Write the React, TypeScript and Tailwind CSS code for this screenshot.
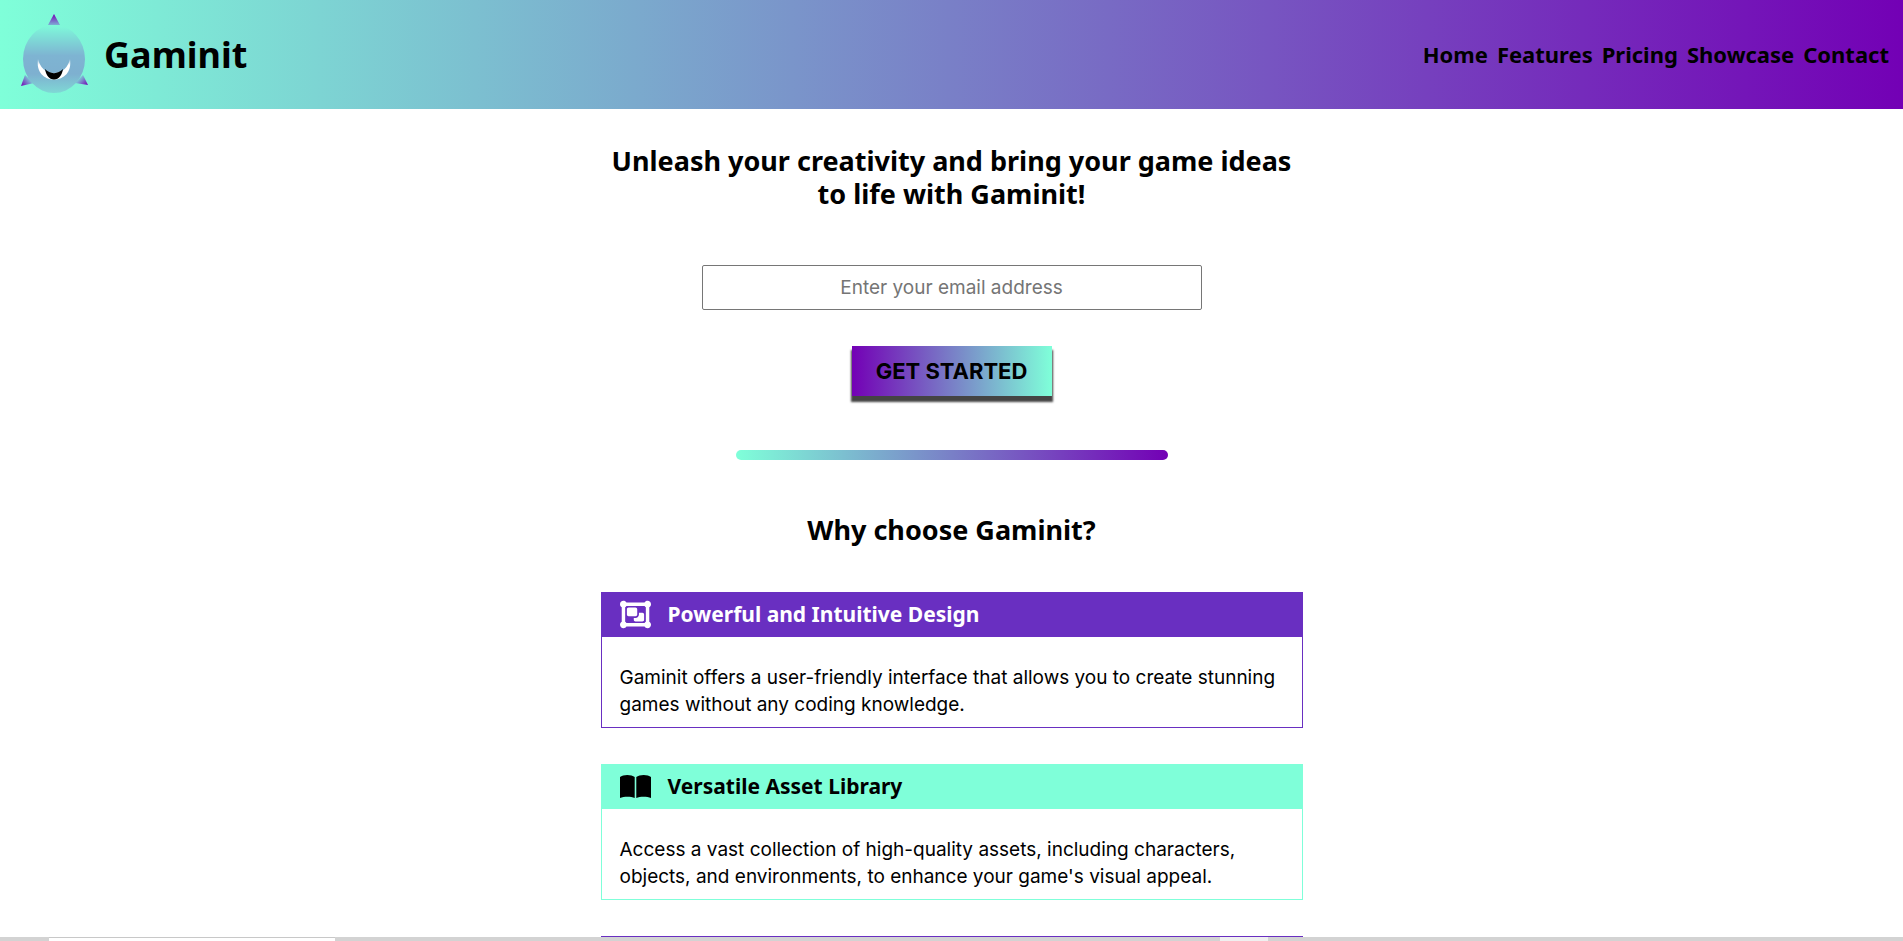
import type { ReactNode } from "react";
import { FaObjectGroup } from "react-icons/fa6";

const links = ["Home", "Features", "Pricing", "Showcase", "Contact"];

function Logo() {
  return (
    <svg viewBox="0 0 72 84" className="h-[84px] w-[72px] shrink-0" aria-hidden="true">
      <defs>
        <linearGradient id="body" x1="0" y1="0" x2="0" y2="1">
          <stop offset="0" stopColor="#7ffbd9" />
          <stop offset="0.1" stopColor="#7eead8" />
          <stop offset="0.45" stopColor="#7eb4d2" />
          <stop offset="0.72" stopColor="#7eb0d0" />
          <stop offset="1" stopColor="#7fd8d5" />
        </linearGradient>
        <linearGradient id="top" x1="0" y1="0" x2="0" y2="1">
          <stop offset="0" stopColor="#7300b5" />
          <stop offset="1" stopColor="#7eaed4" />
        </linearGradient>
        <linearGradient id="left" x1="0" y1="1" x2="1" y2="0.3">
          <stop offset="0" stopColor="#7300b5" />
          <stop offset="0.7" stopColor="#7eb8d4" />
        </linearGradient>
        <linearGradient id="right" x1="1" y1="1" x2="0" y2="0.3">
          <stop offset="0" stopColor="#7300b5" />
          <stop offset="0.7" stopColor="#7eb8d4" />
        </linearGradient>
        <linearGradient id="smile" x1="0" y1="0" x2="0" y2="1">
          <stop offset="0" stopColor="#fff" stopOpacity="0.3" />
          <stop offset="0.3" stopColor="#fff" />
        </linearGradient>
      </defs>
      <path d="M36 1 L42 12 H30 Z" fill="url(#top)" />
      <path d="M7 62 L3 73 L16 70 Z" fill="url(#left)" />
      <path d="M65 62 L70 72 L57 70 Z" fill="url(#right)" />
      <ellipse cx="36" cy="46" rx="31" ry="34" fill="url(#body)" />
      <path d="M20 46 C22 54 27 60 36 60 C45 60 50 54 52 46 C54 59 46 66.500 36 66.500 C26 66.500 18 59 20 46 Z" fill="url(#smile)" />
      <path d="M27 56 C32 61.500 40 61.500 45 56 C44 62 41 66.500 36 66.500 C31 66.500 28 62 27 56 Z" fill="#000" />
    </svg>
  );
}

function Book() {
  return (
    <svg viewBox="0 0 31 27" className="h-[27px] w-[31px]" fill="currentColor" aria-hidden="true">
      <path d="M0 4 C3 1.200 11.500 1.200 14.700 4 V25 C11 23.300 4 23.300 0 25 Z" />
      <path d="M16.300 4 C19.500 1.200 28 1.200 31 4 V25 C27 23.300 20 23.300 16.300 25 Z" />
    </svg>
  );
}

type CardProps = {
  title: string;
  icon: ReactNode;
  border: string;
  head: string;
  children: ReactNode;
};

function Card({ title, icon, border, head, children }: CardProps) {
  return (
    <article className={`w-full border ${border}`}>
      <h3 className={`flex h-11 items-center gap-4 px-[18px] font-['Noto_Sans',sans-serif] text-[21px] font-bold ${head}`}>
        <span className="flex w-8 justify-start pb-[2px]">{icon}</span>
        {title}
      </h3>
      <p className="px-[18px] pt-[27px] pb-[9px] text-[19px] leading-[27px]">{children}</p>
    </article>
  );
}

export default function App() {
  return (
    <div className="flex h-screen flex-col overflow-hidden bg-white font-['Inter',sans-serif] text-black">
      <header className="flex h-[109px] shrink-0 items-center justify-between bg-linear-to-r/srgb from-[#7fffd9] to-[#7300b5] pr-[14px] pl-[18px] font-['Noto_Sans',sans-serif] font-bold">
        <div className="flex items-center gap-[14px]">
          <Logo />
          <span className="text-4xl">Gaminit</span>
        </div>
        <nav className="flex gap-[9px] text-[22px]">
          {links.map((link) => (
            <a key={link} href={`#${link.toLowerCase()}`}>{link}</a>
          ))}
        </nav>
      </header>

      <main className="min-h-0 flex-1 overflow-hidden">
        <div className="mx-auto flex max-w-[702px] flex-col items-center">
          <h1 className="mt-[35px] text-center font-['Noto_Sans',sans-serif] text-[27px] leading-[33px] font-bold">
            Unleash your creativity and bring your game ideas to life with Gaminit!
          </h1>
          <form className="mt-[55px] flex w-full flex-col items-center gap-9">
            <input
              type="email"
              aria-label="Email address"
              placeholder="Enter your email address"
              className="h-[45px] w-full max-w-[500px] rounded-xs border border-[#767676] text-center text-[19px] placeholder:text-[#757575]"
            />
            <button type="button" className="h-[50px] w-[200px] bg-linear-to-r/srgb from-[#7300b5] to-[#7fffd9] text-[22px] font-bold shadow-[0_5px_2px_1px_#444]">
              GET STARTED
            </button>
          </form>
          <hr className="mt-[54px] h-[10px] w-full max-w-[432px] rounded-full border-0 bg-linear-to-r/srgb from-[#7fffd9] to-[#7300b5]" />
          <h2 className="mt-[53px] font-['Noto_Sans',sans-serif] text-[27px] leading-[33px] font-bold">Why choose Gaminit?</h2>
          <section className="mt-[46px] flex w-full flex-col gap-9">
            <Card title="Powerful and Intuitive Design" icon={<FaObjectGroup size={31} />} border="border-[#692fc1]" head="bg-[#692fc1] text-white">
              Gaminit offers a user-friendly interface that allows you to create stunning games without any coding knowledge.
            </Card>
            <Card title="Versatile Asset Library" icon={<Book />} border="border-[#7fffd9]" head="bg-[#7fffd9]">
              Access a vast collection of high-quality assets, including characters, objects, and environments, to enhance your game's visual appeal.
            </Card>
            <div className="h-px bg-[#692fc1]" />
          </section>
        </div>
      </main>

      <footer className="flex h-1 shrink-0 bg-[#d3d3d3]">
        <div className="ml-[49px] w-[286px] border-t border-[#c8c8c8] bg-white" />
        <div className="ml-[885px] w-12 bg-[#f0f0f0]" />
      </footer>
    </div>
  );
}
